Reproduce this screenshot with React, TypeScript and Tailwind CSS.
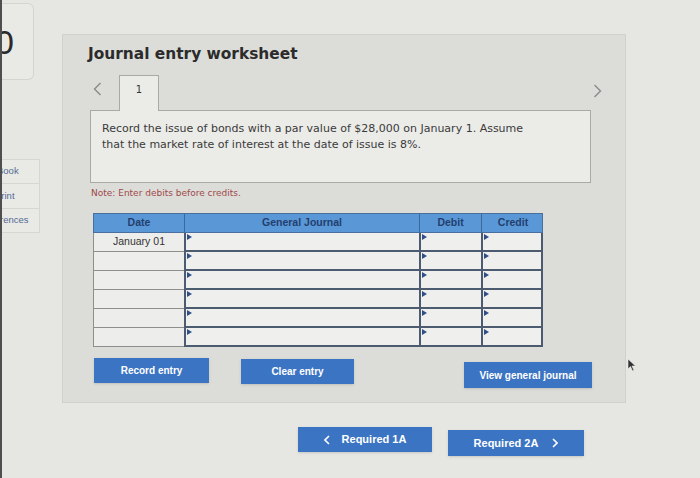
import React from 'react';

const rows = ['January 01', '', '', '', '', ''];

const Marker = () => (
  <span className="absolute left-[1px] top-[1px] h-0 w-0 border-y-[3px] border-l-[5px] border-y-transparent border-l-[#2f4f86]" />
);

const App: React.FC = () => {
  return (
    <div className="relative flex h-[478px] w-[700px] overflow-hidden bg-[#e6e6e3] font-['DejaVu_Sans',sans-serif] text-[#333]">
      {/* Left sidebar (cut off) */}
      <div className="flex w-[40px] shrink-0 flex-col border-l-2 border-[#4f4f4f]">
        <div className="mt-[3px] flex h-[77px] w-[32px] items-center overflow-hidden rounded-r-md border border-l-0 border-[#d4d4d1] bg-[#e9e9e6]">
          <span className="ml-[-7px] font-['Liberation_Sans',sans-serif] text-[34px] leading-none text-[#2a2a2a]">0</span>
        </div>
        <div className="mt-[79px] flex flex-col font-['Liberation_Sans',sans-serif] text-[9.5px] text-[#546b92]">
          <div className="flex h-[25px] items-center overflow-hidden border border-l-0 border-[#d6d6d3] bg-[#e9e9e6]">
            <span className="ml-[-5px]">Book</span>
          </div>
          <div className="flex h-[25px] items-center overflow-hidden border border-l-0 border-t-0 border-[#d6d6d3] bg-[#e9e9e6]">
            <span className="ml-[-7px]">Print</span>
          </div>
          <div className="flex h-[24px] items-center overflow-hidden border border-l-0 border-t-0 border-[#d6d6d3] bg-[#e9e9e6]">
            <span className="ml-[-22px]">References</span>
          </div>
        </div>
      </div>

      {/* Main column */}
      <div className="ml-[22px] flex flex-col">
        <div className="mt-[34px] flex h-[369px] w-[564px] flex-col border border-[#d0d0cd] bg-[#dcdcd9] pl-[27px]">
          <h1 className="ml-[-2px] mt-[9px] text-[15.4px] font-bold leading-[20px] text-[#2b2b2b]">
            Journal entry worksheet
          </h1>

          {/* Tab row */}
          <div className="mt-[11px] flex h-[35px] w-[512px] items-start">
            <svg className="ml-[3px] mt-[7px]" width="9" height="14" viewBox="0 0 9 14">
              <path d="M7.5 1 L1.5 7 L7.5 13" fill="none" stroke="#8a8a8a" strokeWidth="1.4" />
            </svg>
            <div className="relative z-10 ml-[17px] flex h-[36px] w-[40px] justify-center border border-b-0 border-[#a9a9a6] bg-[#ebebe8] pt-[6px] text-[10px] text-[#333]">
              1
            </div>
            <svg className="ml-auto mt-[9px]" width="9" height="14" viewBox="0 0 9 14">
              <path d="M1.5 1 L7.5 7 L1.5 13" fill="none" stroke="#8a8a8a" strokeWidth="1.4" />
            </svg>
          </div>

          {/* Question box */}
          <div className="h-[73px] w-[501px] border border-[#a9a9a6] bg-[#ebebe8] pl-[11px] pt-[10px] text-[11px] leading-[16px] text-[#3a3a3a]">
            Record the issue of bonds with a par value of $28,000 on January 1. Assume
            <br />
            that the market rate of interest at the date of issue is 8%.
          </div>

          <p className="ml-[1px] mt-[5px] text-[9px] leading-[10px] text-[#a04a4a]">
            Note: Enter debits before credits.
          </p>

          {/* Journal table */}
          <div className="ml-[3px] mt-[15px] w-[450px] font-['Liberation_Sans',sans-serif]">
            <div className="grid h-[20px] grid-cols-[91px_235px_62px_62px] border border-[#4a6f9e] bg-[#5a97d6] text-[10.5px] font-bold text-[#233f6e]">
              <div className="flex items-center justify-center border-r border-[#3f6796]">Date</div>
              <div className="flex items-center justify-center border-r border-[#3f6796]">General Journal</div>
              <div className="flex items-center justify-center border-r border-[#3f6796]">Debit</div>
              <div className="flex items-center justify-center">Credit</div>
            </div>
            {rows.map((d, i) => (
              <div key={i} className="grid h-[19px] grid-cols-[91px_235px_62px_62px]">
                <div className="flex items-center justify-center border-b border-l border-[#8e8e8c] bg-[#ededeb] text-[10.5px] text-[#333]">
                  {d}
                </div>
                <div className="relative border-b-2 border-l-2 border-[#4c5b70] bg-[#efefed]">
                  <Marker />
                </div>
                <div className="relative border-b-2 border-l-2 border-[#4c5b70] bg-[#efefed]">
                  <Marker />
                </div>
                <div className="relative border-b-2 border-l-2 border-r-2 border-[#4c5b70] bg-[#efefed]">
                  <Marker />
                </div>
              </div>
            ))}
          </div>

          {/* Action buttons */}
          <div className="ml-[4px] mt-[11px] flex items-start font-['Liberation_Sans',sans-serif] text-[10px] font-bold text-white">
            <button className="h-[25px] w-[115px] bg-[#3b74c3] shadow-sm">Record entry</button>
            <button className="ml-[32px] mt-[1px] h-[25px] w-[113px] bg-[#3b74c3] shadow-sm">Clear entry</button>
            <button className="ml-[110px] mt-[4px] h-[26px] w-[128px] bg-[#3b74c3] shadow-sm">View general journal</button>
          </div>
        </div>

        {/* Bottom navigation */}
        <div className="ml-[236px] mt-[24px] flex items-start font-['Liberation_Sans',sans-serif] text-[11px] font-bold text-white">
          <button className="flex h-[25px] w-[134px] items-center justify-center gap-[12px] bg-[#3b74c3] shadow-sm">
            <svg width="6" height="10" viewBox="0 0 6 10">
              <path d="M5 1 L1 5 L5 9" fill="none" stroke="white" strokeWidth="1.6" />
            </svg>
            <span>Required 1A</span>
          </button>
          <button className="ml-[16px] mt-[3px] flex h-[26px] w-[136px] items-center justify-center gap-[14px] bg-[#3b74c3] shadow-sm">
            <span>Required 2A</span>
            <svg width="6" height="10" viewBox="0 0 6 10">
              <path d="M1 1 L5 5 L1 9" fill="none" stroke="white" strokeWidth="1.6" />
            </svg>
          </button>
        </div>
      </div>

      {/* Mouse pointer */}
      <svg className="absolute left-[627px] top-[358px]" width="10" height="14" viewBox="0 0 10 14">
        <path d="M1 1 L1 11 L3.5 8.5 L5.5 13 L7 12.3 L5 8 L8.5 8 Z" fill="#333" stroke="#eee" strokeWidth="0.6" />
      </svg>
    </div>
  );
};

export default App;
